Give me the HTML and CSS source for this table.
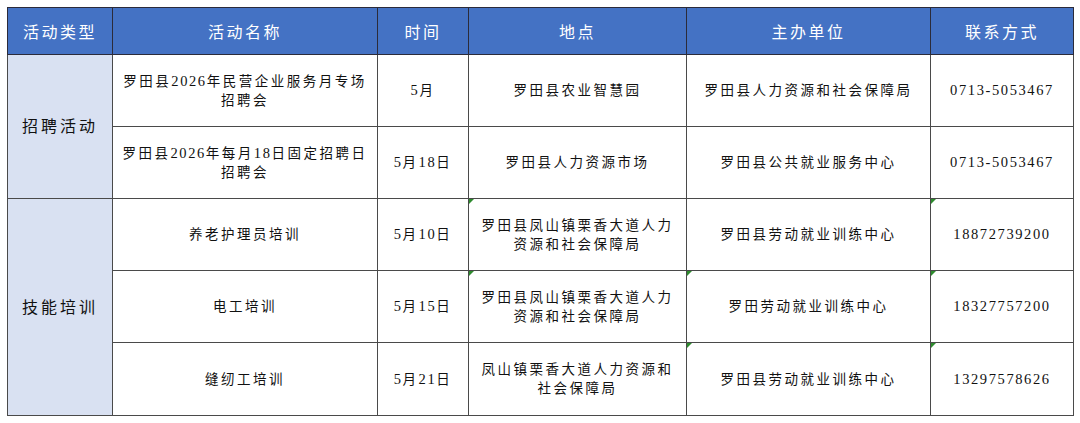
FILE: index.html
```html
<!DOCTYPE html>
<html lang="zh">
<head>
<meta charset="utf-8">
<link rel="stylesheet" href="styles.css">
</head>
<body>
<div class="page">
<table class="sched">
  <colgroup>
    <col class="c1"><col class="c2"><col class="c3"><col class="c4"><col class="c5"><col class="c6">
  </colgroup>
  <thead>
    <tr>
      <th>活动类型</th><th>活动名称</th><th>时间</th><th>地点</th><th>主办单位</th><th>联系方式</th>
    </tr>
  </thead>
  <tbody>
    <tr>
      <td class="type" rowspan="2">招聘活动</td>
      <td>罗田县<span class="num">2026</span>年民营企业服务月专场<br>招聘会</td>
      <td><span class="num">5</span>月</td>
      <td>罗田县农业智慧园</td>
      <td>罗田县人力资源和社会保障局</td>
      <td><span class="num">0713-5053467</span></td>
    </tr>
    <tr>
      <td>罗田县<span class="num">2026</span>年每月<span class="num">18</span>日固定招聘日<br>招聘会</td>
      <td><span class="num">5</span>月<span class="num">18</span>日</td>
      <td>罗田县人力资源市场</td>
      <td>罗田县公共就业服务中心</td>
      <td><span class="num">0713-5053467</span></td>
    </tr>
    <tr>
      <td class="type" rowspan="3">技能培训</td>
      <td>养老护理员培训</td>
      <td><span class="num">5</span>月<span class="num">10</span>日</td>
      <td><span class="mark"></span>罗田县凤山镇栗香大道人力<br>资源和社会保障局</td>
      <td>罗田县劳动就业训练中心</td>
      <td><span class="mark"></span><span class="num">18872739200</span></td>
    </tr>
    <tr>
      <td>电工培训</td>
      <td><span class="num">5</span>月<span class="num">15</span>日</td>
      <td><span class="mark"></span>罗田县凤山镇栗香大道人力<br>资源和社会保障局</td>
      <td><span class="mark"></span>罗田劳动就业训练中心</td>
      <td><span class="mark"></span><span class="num">18327757200</span></td>
    </tr>
    <tr>
      <td>缝纫工培训</td>
      <td><span class="num">5</span>月<span class="num">21</span>日</td>
      <td>凤山镇栗香大道人力资源和<br>社会保障局</td>
      <td><span class="mark"></span>罗田县劳动就业训练中心</td>
      <td><span class="mark"></span><span class="num">13297578626</span></td>
    </tr>
  </tbody>
</table>
</div>
</body>
</html>
```

FILE: styles.css
```css
html, body {
  margin: 0;
  padding: 0;
  background: #ffffff;
}

.page {
  padding: 7px 0 0 7px;
}

.sched {
  border-collapse: collapse;
  table-layout: fixed;
  width: 1066px;
  font-family: "Liberation Serif", "Noto Sans CJK SC", serif;
  color: #111111;
}

.c1 { width: 105px; }
.c2 { width: 265px; }
.c3 { width: 91px; }
.c4 { width: 218px; }
.c5 { width: 244px; }
.c6 { width: 143px; }

.sched th {
  background: #4472c4;
  color: #ffffff;
  font-family: "Noto Sans CJK SC", sans-serif;
  font-weight: 400;
  font-size: 16px;
  letter-spacing: 2.5px;
  height: 46px;
  padding: 0;
  text-align: center;
  border: 1px solid #2b2b3a;
}

.sched td {
  position: relative;
  height: 71px;
  padding: 0 2px;
  text-align: center;
  vertical-align: middle;
  font-size: 13.5px;
  line-height: 19px;
  letter-spacing: 2.5px;
  border: 1px solid #4a4a4a;
}

.sched tbody tr:last-child td {
  height: 72px;
}

.sched td.type {
  background: #d9e1f2;
  font-size: 16px;
  letter-spacing: 3px;
}

.sched .num {
  font-family: "Liberation Serif", serif;
  font-size: 14.5px;
  letter-spacing: 1.6px;
}

.mark {
  position: absolute;
  left: 0;
  top: 0;
  width: 0;
  height: 0;
  border-top: 5px solid #2e8b2e;
  border-right: 5px solid transparent;
}
```
